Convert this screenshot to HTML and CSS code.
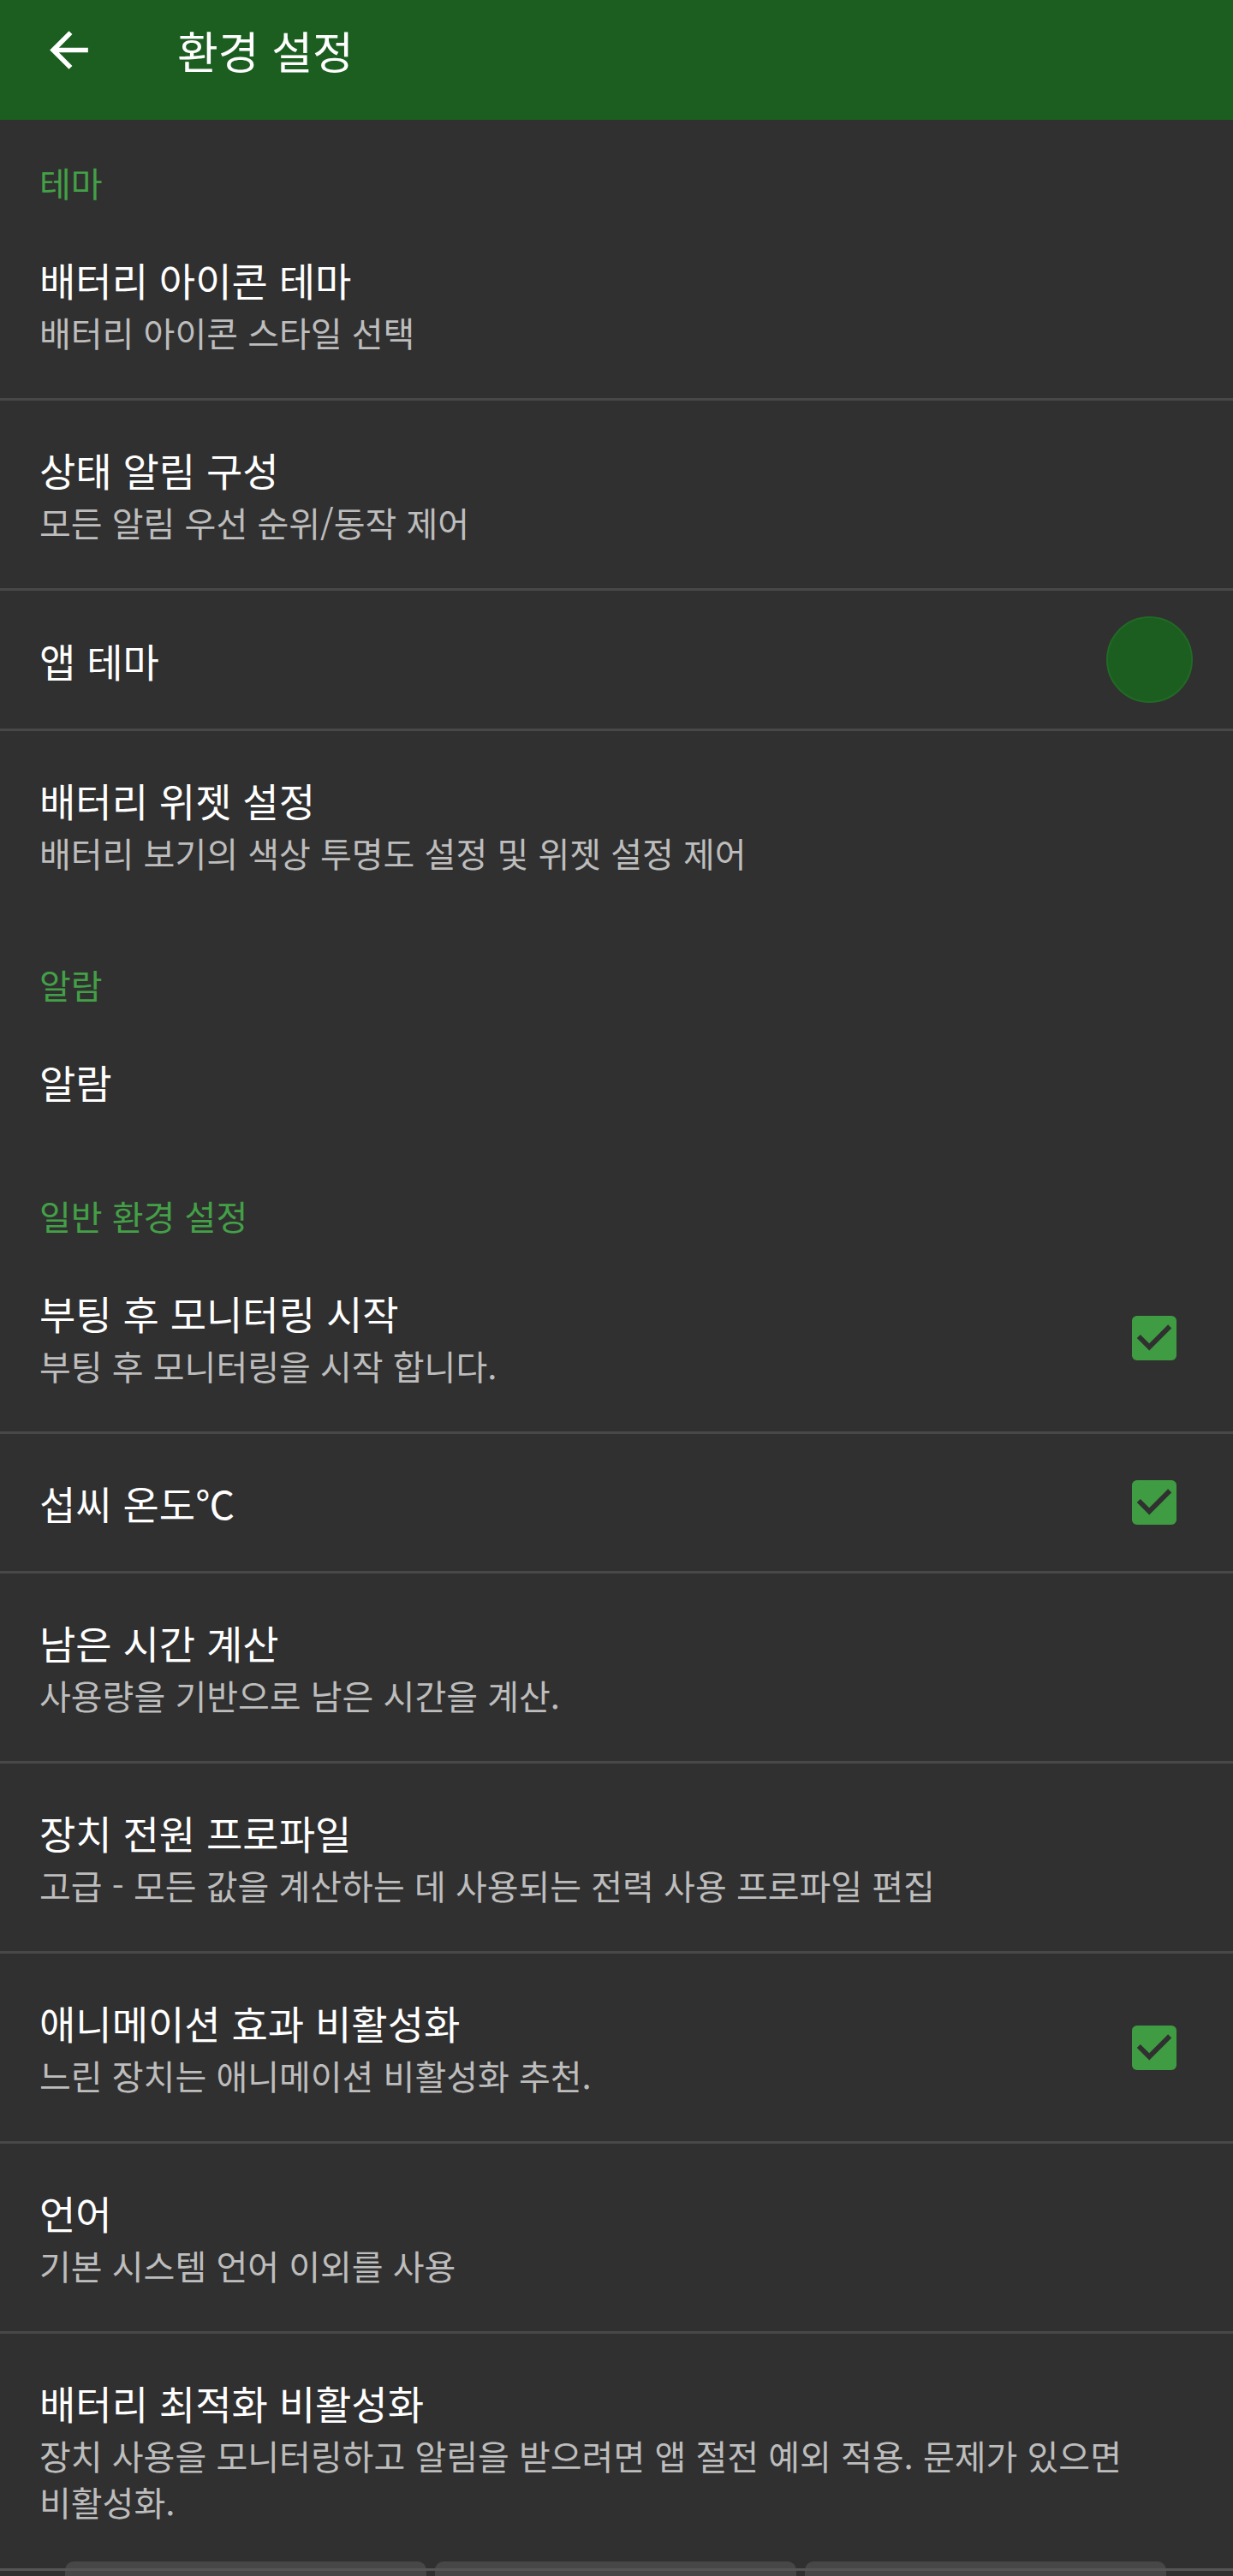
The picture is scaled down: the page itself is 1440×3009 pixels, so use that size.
FILE: index.html
```html
<!DOCTYPE html>
<html lang="ko">
<head>
    <meta charset="UTF-8">
    <meta name="viewport" content="width=device-width, initial-scale=1.0">
    <title>환경 설정</title>
    <link rel="stylesheet" href="styles.css">
</head>
<body>

<header class="toolbar">
    <svg class="back" viewBox="0 0 24 24" width="67" height="67">
        <path d="M20 11H7.83l5.59-5.59L12 4l-8 8 8 8 1.41-1.41L7.83 13H20v-2z" fill="#fff"/>
    </svg>
    <h1>환경 설정</h1>
</header>

<main class="prefs">
    <div class="category">테마</div>
    <div class="pref">
        <div class="pref-text">
            <div class="pref-title">배터리 아이콘 테마</div>
            <div class="pref-summary">배터리 아이콘 스타일 선택</div>
        </div>
    </div>
    <div class="pref">
        <div class="pref-text">
            <div class="pref-title">상태 알림 구성</div>
            <div class="pref-summary">모든 알림 우선 순위/동작 제어</div>
        </div>
    </div>
    <div class="pref">
        <div class="pref-text">
            <div class="pref-title">앱 테마</div>
        </div>
        <div class="swatch"></div>
    </div>
    <div class="pref">
        <div class="pref-text">
            <div class="pref-title">배터리 위젯 설정</div>
            <div class="pref-summary">배터리 보기의 색상 투명도 설정 및 위젯 설정 제어</div>
        </div>
    </div>

    <div class="category">알람</div>
    <div class="pref">
        <div class="pref-text">
            <div class="pref-title">알람</div>
        </div>
    </div>

    <div class="category">일반 환경 설정</div>
    <div class="pref">
        <div class="pref-text">
            <div class="pref-title">부팅 후 모니터링 시작</div>
            <div class="pref-summary">부팅 후 모니터링을 시작 합니다.</div>
        </div>
        <svg class="check" viewBox="3 3 18 18" width="52" height="52">
            <rect x="3" y="3" width="18" height="18" rx="2" fill="#3f9c43"/>
            <path d="M10 17l-5-5 1.41-1.41L10 14.17l7.59-7.59L19 8l-9 9z" fill="#303030"/>
        </svg>
    </div>
    <div class="pref">
        <div class="pref-text">
            <div class="pref-title">섭씨 온도℃</div>
        </div>
        <svg class="check" viewBox="3 3 18 18" width="52" height="52">
            <rect x="3" y="3" width="18" height="18" rx="2" fill="#3f9c43"/>
            <path d="M10 17l-5-5 1.41-1.41L10 14.17l7.59-7.59L19 8l-9 9z" fill="#303030"/>
        </svg>
    </div>
    <div class="pref">
        <div class="pref-text">
            <div class="pref-title">남은 시간 계산</div>
            <div class="pref-summary">사용량을 기반으로 남은 시간을 계산.</div>
        </div>
    </div>
    <div class="pref">
        <div class="pref-text">
            <div class="pref-title">장치 전원 프로파일</div>
            <div class="pref-summary">고급 - 모든 값을 계산하는 데 사용되는 전력 사용 프로파일 편집</div>
        </div>
    </div>
    <div class="pref">
        <div class="pref-text">
            <div class="pref-title">애니메이션 효과 비활성화</div>
            <div class="pref-summary">느린 장치는 애니메이션 비활성화 추천.</div>
        </div>
        <svg class="check" viewBox="3 3 18 18" width="52" height="52">
            <rect x="3" y="3" width="18" height="18" rx="2" fill="#3f9c43"/>
            <path d="M10 17l-5-5 1.41-1.41L10 14.17l7.59-7.59L19 8l-9 9z" fill="#303030"/>
        </svg>
    </div>
    <div class="pref">
        <div class="pref-text">
            <div class="pref-title">언어</div>
            <div class="pref-summary">기본 시스템 언어 이외를 사용</div>
        </div>
    </div>
    <div class="pref">
        <div class="pref-text">
            <div class="pref-title">배터리 최적화 비활성화</div>
            <div class="pref-summary">장치 사용을 모니터링하고 알림을 받으려면 앱 절전 예외 적용. 문제가 있으면 비활성화.</div>
        </div>
    </div>
</main>

<div class="bottom-tabs">
    <div class="tab"></div>
    <div class="tab"></div>
    <div class="tab"></div>
</div>

</body>
</html>
```

FILE: styles.css
```css
body {
    margin: 0;
    min-height: 3009px;
    position: relative;
    font-family: "Noto Sans CJK KR", "Noto Sans", sans-serif;
    background-color: #303030;
    color: #fff;
    word-break: keep-all;
}
.toolbar {
    display: flex;
    align-items: center;
    height: 116px;
    padding: 0 0 24px 47px;
    background-color: #1b5e20;
}
.toolbar .back {
    flex-shrink: 0;
}
.toolbar h1 {
    margin: 0 0 0 93px;
    font-size: 52px;
    font-weight: 400;
}
.category {
    padding: 50px 46px 6px;
    font-size: 40px;
    line-height: 54px;
    color: #43a047;
}
.category:first-child {
    padding-top: 46px;
}
.pref {
    display: flex;
    align-items: center;
    padding: 50px 47px 50px 46px;
}
.pref + .pref {
    border-top: 3px solid #484848;
}
.pref-text {
    flex: 1;
}
.pref-title {
    font-size: 46px;
    line-height: 60px;
}
.pref-summary {
    margin-top: 5px;
    font-size: 40px;
    line-height: 54px;
    color: #bdbdbd;
}
.swatch {
    width: 97px;
    height: 97px;
    margin: -20px 0;
    border-radius: 50%;
    background-color: #1b5e20;
    border: 2px solid #216a25;
}
.check {
    margin-right: 19px;
}
.bottom-tabs {
    position: absolute;
    left: 0;
    right: 0;
    bottom: 0;
    height: 17px;
    display: flex;
    gap: 10px;
    padding: 0 78px 0 76px;
}
.bottom-tabs::after {
    content: "";
    position: absolute;
    left: 0;
    right: 0;
    top: 8px;
    height: 3px;
    background-color: #555;
}
.tab {
    flex: 1;
    background-color: #474747;
    border-radius: 10px 10px 0 0;
}
```
